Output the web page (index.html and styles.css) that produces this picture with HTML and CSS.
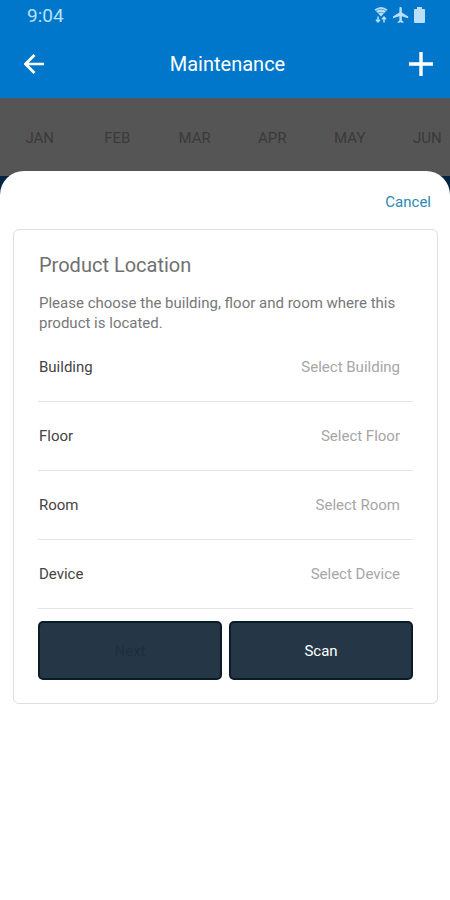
FILE: index.html
```html
<!DOCTYPE html>
<html lang="en">
<head>
<meta charset="utf-8">
<meta name="viewport" content="width=device-width, initial-scale=1">
<title>Maintenance</title>
<link rel="stylesheet" href="styles.css">
</head>
<body>
<header class="header">
  <div class="status">
    <span>9:04</span>
    <div class="status-icons">
      <svg width="14" height="18" viewBox="0 0 14 18" aria-hidden="true">
        <path d="M0.5 3.6Q7-1.8 13.5 3.6L7 10.5Z" fill="currentColor"/>
        <path d="M2 5Q7 1.400 12 5M4 7.200Q7 5 10 7.200" fill="none" stroke="#0077cb" stroke-width=".6"/>
        <path d="M4 10.500v5M2 13.700l2 2.200 2-2.200M10 16.500v-5M8 13.300l2-2.200 2 2.200" fill="none" stroke="currentColor" stroke-width="1.500"/>
      </svg>
      <svg width="16" height="16" viewBox="2 2 20 20" aria-hidden="true">
        <path d="M21 16v-2l-8-5V3.500c0-.83-.67-1.500-1.500-1.500S10 2.670 10 3.500V9l-8 5v2l8-2.500V19l-2 1.500V22l3.500-1 3.500 1v-1.500L13 19v-5.500l8 2.500z" fill="currentColor"/>
      </svg>
      <svg width="11" height="16" viewBox="0 0 11 16" aria-hidden="true">
        <path d="M3 0h5v2h2q1 0 1 1v12q0 1-1 1H1q-1 0-1-1V3q0-1 1-1h2z" fill="currentColor"/>
      </svg>
    </div>
  </div>
  <div class="appbar">
    <button class="icon-button" type="button" aria-label="Back">
      <svg width="20" height="20" viewBox="0 0 20 20" aria-hidden="true"><path d="M20 10H2M10.500 1L1.500 10l9 9" fill="none" stroke="currentColor" stroke-width="2.700"/></svg>
    </button>
    <h1 class="title">Maintenance</h1>
    <button class="icon-button" type="button" aria-label="Add">
      <svg width="24" height="24" viewBox="0 0 24 24" aria-hidden="true"><path d="M12 0v24M0 12h24" fill="none" stroke="currentColor" stroke-width="3.400"/></svg>
    </button>
  </div>
</header>
<div class="months-clip">
  <div class="months">
    <span>JAN</span><span>FEB</span><span>MAR</span><span>APR</span><span>MAY</span><span>JUN</span>
  </div>
</div>
<main class="sheet">
  <div class="sheet-bar"><button class="cancel" type="button">Cancel</button></div>
  <form class="card">
    <h2 class="card-title">Product Location</h2>
    <p class="intro">Please choose the building, floor and room where this product is located.</p>
    <div class="field">
      <label for="building">Building</label>
      <select id="building"><option>Select Building</option></select>
    </div>
    <div class="field">
      <label for="floor">Floor</label>
      <select id="floor"><option>Select Floor</option></select>
    </div>
    <div class="field">
      <label for="room">Room</label>
      <select id="room"><option>Select Room</option></select>
    </div>
    <div class="field">
      <label for="device">Device</label>
      <select id="device"><option>Select Device</option></select>
    </div>
    <div class="actions">
      <button class="action" type="button" disabled>Next</button>
      <button class="action" type="button">Scan</button>
    </div>
  </form>
</main>
</body>
</html>
```
FILE: styles.css
```css
* {
  box-sizing: border-box;
}

body {
  margin: 0;
  min-height: 100vh;
  display: flex;
  flex-direction: column;
  background: #032443;
  font-family: Roboto, "Liberation Sans", sans-serif;
  font-size: 15px;
  color: #444;
}

button,
select {
  font: inherit;
  border: 0;
  background: none;
  padding: 0;
  margin: 0;
}

.header {
  background: #0077cb;
  color: #fff;
}

.status {
  display: flex;
  align-items: center;
  justify-content: space-between;
  height: 30px;
  padding: 0 25px 0 27px;
  color: #b9e0f8;
  font-size: 19px;
}

.status-icons {
  display: flex;
  align-items: center;
  gap: 5px;
}

.appbar {
  display: flex;
  align-items: center;
  justify-content: space-between;
  height: 68px;
  padding: 0 17px 0 22px;
}

.icon-button {
  display: flex;
  align-items: center;
  justify-content: center;
  width: 24px;
  height: 24px;
  color: #fff;
}

.title {
  margin: 0;
  font-size: 20px;
  font-weight: 400;
}

.months-clip {
  overflow: hidden;
  background: #555;
}

.months {
  display: grid;
  grid-template-columns: repeat(6, 1fr);
  align-items: center;
  height: 78px;
  margin-right: -16px;
  padding: 2px 0 0 1px;
  text-align: center;
  color: #3a3a3a;
}

.sheet {
  flex: 1;
  position: relative;
  margin-top: -5px;
  padding: 20px 12px 24px 13px;
  border-radius: 24px 24px 0 0;
  background: #fff;
}

.sheet-bar {
  display: flex;
  justify-content: flex-end;
  padding: 0 7px 16px 0;
}

.cancel {
  line-height: 22px;
  color: #2b89b2;
}

.card {
  padding: 24px 24px 23px;
  border: 1px solid #dedede;
  border-radius: 6px;
}

.card-title {
  margin: 0 1px 17px;
  font-size: 20px;
  font-weight: 400;
  line-height: 22px;
  color: #707070;
}

.intro {
  margin: 0 1px;
  line-height: 20px;
  color: #777;
}

.field {
  display: flex;
  align-items: center;
  height: 69px;
  padding: 0 13px 0 1px;
  border-bottom: 1px solid #e4e4e4;
}

.field select {
  flex: 1;
  height: 40px;
  appearance: none;
  text-align-last: right;
  color: #a6a6a6;
}

.actions {
  display: flex;
  gap: 7px;
  margin-top: 12px;
}

.action {
  flex: 1;
  height: 59px;
  border: 2px solid #0b1c29;
  border-radius: 5px;
  background: #253746;
  color: #fff;
}

.action:disabled {
  color: #1e2f3d;
}
```
